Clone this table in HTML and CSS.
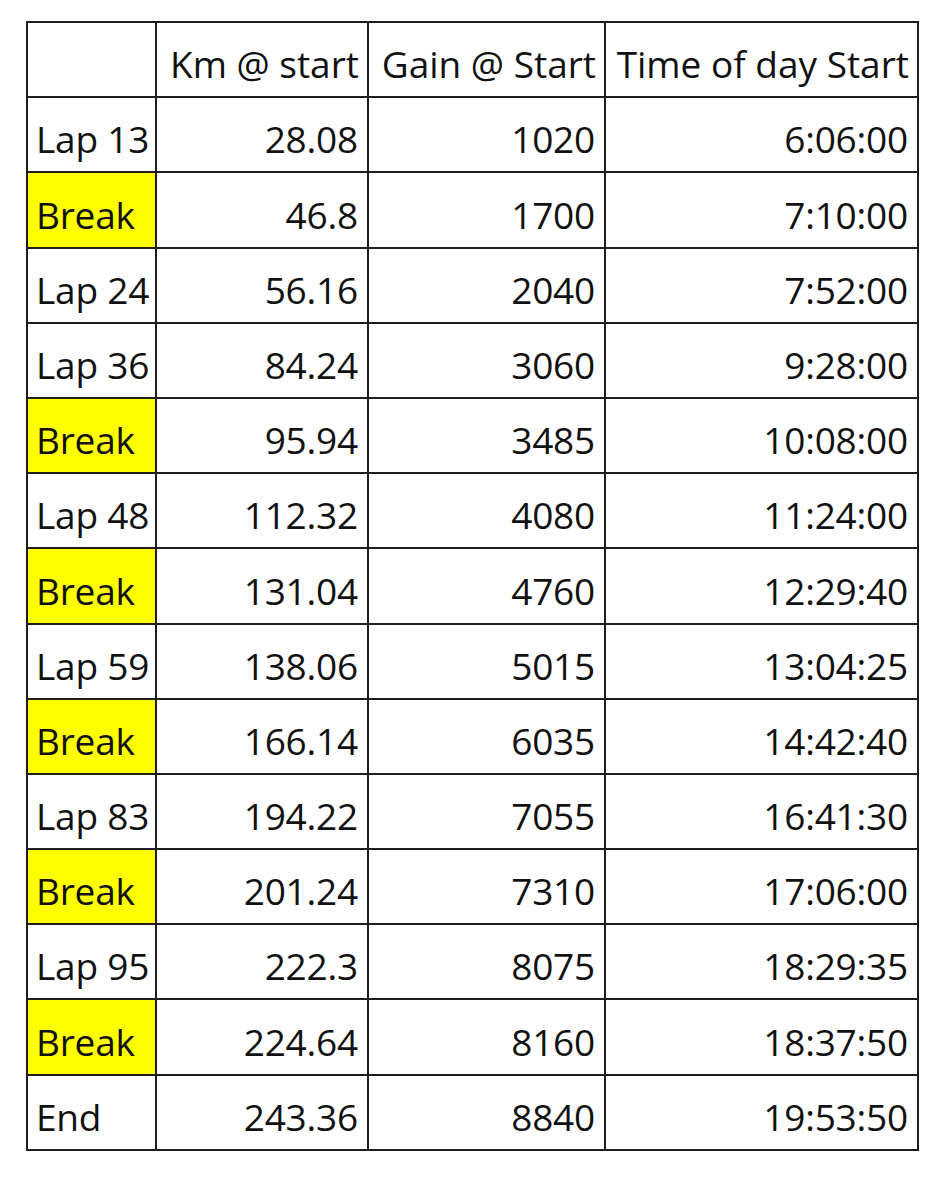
FILE: index.html
```html
<!DOCTYPE html>
<html>
<head>
<meta charset="utf-8">
<link rel="stylesheet" href="styles.css">
</head>
<body>
<table class="sheet">
<colgroup>
<col class="c1"><col class="c2"><col class="c3"><col class="c4">
</colgroup>
<tr><td class="lbl"></td><td class="hd">Km @ start</td><td class="hd">Gain @ Start</td><td class="hd">Time of day Start</td></tr>
<tr><td class="lbl">Lap 13</td><td>28.08</td><td>1020</td><td>6:06:00</td></tr>
<tr><td class="lbl brk">Break</td><td>46.8</td><td>1700</td><td>7:10:00</td></tr>
<tr><td class="lbl">Lap 24</td><td>56.16</td><td>2040</td><td>7:52:00</td></tr>
<tr><td class="lbl">Lap 36</td><td>84.24</td><td>3060</td><td>9:28:00</td></tr>
<tr><td class="lbl brk">Break</td><td>95.94</td><td>3485</td><td>10:08:00</td></tr>
<tr><td class="lbl">Lap 48</td><td>112.32</td><td>4080</td><td>11:24:00</td></tr>
<tr><td class="lbl brk">Break</td><td>131.04</td><td>4760</td><td>12:29:40</td></tr>
<tr><td class="lbl">Lap 59</td><td>138.06</td><td>5015</td><td>13:04:25</td></tr>
<tr><td class="lbl brk">Break</td><td>166.14</td><td>6035</td><td>14:42:40</td></tr>
<tr><td class="lbl">Lap 83</td><td>194.22</td><td>7055</td><td>16:41:30</td></tr>
<tr><td class="lbl brk">Break</td><td>201.24</td><td>7310</td><td>17:06:00</td></tr>
<tr><td class="lbl">Lap 95</td><td>222.3</td><td>8075</td><td>18:29:35</td></tr>
<tr><td class="lbl brk">Break</td><td>224.64</td><td>8160</td><td>18:37:50</td></tr>
<tr><td class="lbl">End</td><td>243.36</td><td>8840</td><td>19:53:50</td></tr>
</table>
</body>
</html>
```
FILE: styles.css
```css
html, body {
  margin: 0;
  padding: 0;
  background: #ffffff;
}
body {
  padding: 21px 0 0 26px;
}
.sheet {
  border-collapse: collapse;
  table-layout: fixed;
  width: 891px;
  font-family: "Open Sans", "Liberation Sans", sans-serif;
  font-size: 37px;
  color: #111111;
}
.c1 { width: 129px; }
.c2 { width: 212px; }
.c3 { width: 237px; }
.c4 { width: 313px; }
.sheet td {
  border: 2px solid #1e1e1e;
  height: 63.2px;
  padding: 0 9px 10px 8px;
  vertical-align: bottom;
  text-align: right;
  white-space: nowrap;
  line-height: 44px;
  letter-spacing: -0.2px;
}
.sheet td.lbl {
  text-align: left;
}
.sheet td.hd {
  text-align: right;
  padding-right: 8px;
  letter-spacing: 0;
}
.sheet td.brk {
  background: #ffff00;
}
```
